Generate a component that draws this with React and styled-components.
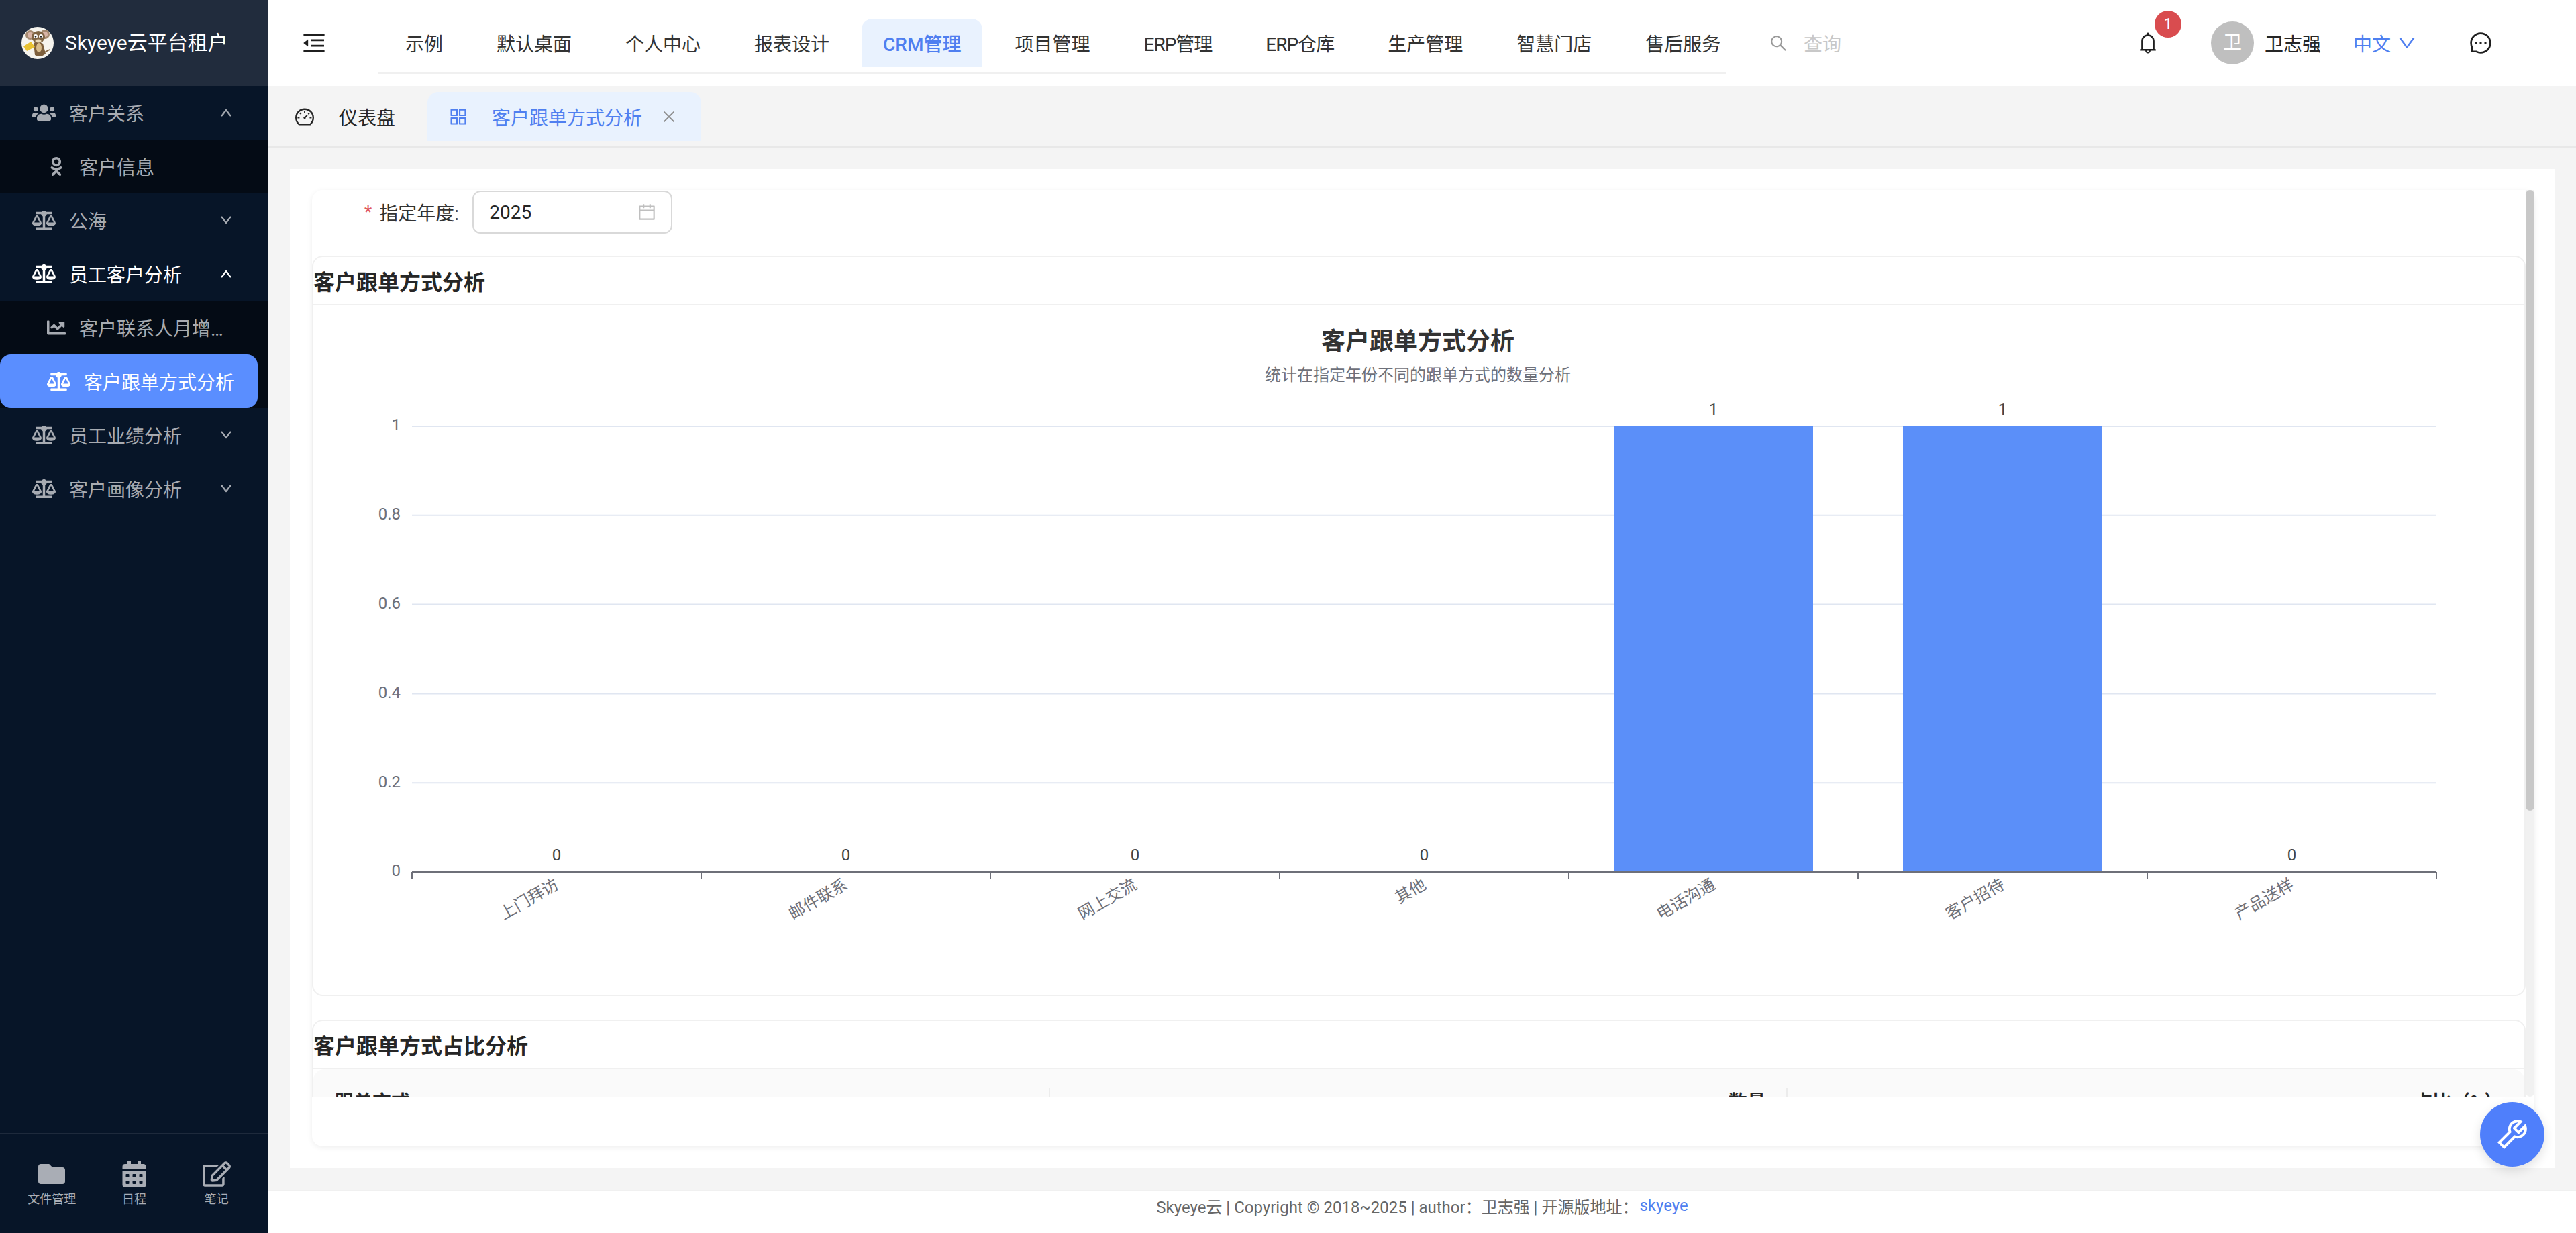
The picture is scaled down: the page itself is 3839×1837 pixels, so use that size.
import React from "react";
import styled, { createGlobalStyle } from "styled-components";
import {
  FaUsers,
  FaOdnoklassniki,
  FaBalanceScale,
  FaChartLine,
  FaFolder,
  FaCalendarAlt,
  FaRegEdit,
} from "react-icons/fa";
import {
  AiOutlineMenuFold,
  AiOutlineDashboard,
  AiOutlineAppstore,
  AiOutlineClose,
  AiOutlineSearch,
  AiOutlineBell,
  AiOutlineMessage,
  AiOutlineCalendar,
  AiOutlineDown,
  AiOutlineUp,
  AiOutlineTool,
} from "react-icons/ai";

const GlobalStyle = createGlobalStyle`
  html, body {
    margin: 0;
    padding: 0;
    background: #fff;
    overflow: hidden;
  }
  body, button, input {
    font-family: Roboto, "Noto Sans CJK SC", sans-serif;
  }
  * {
    box-sizing: border-box;
  }
`;

const Page = styled.div`
  display: flex;
  height: 100vh;
  font-size: 28px;
  color: #262626;
`;

const Sidebar = styled.aside`
  width: 400px;
  flex: none;
  display: flex;
  flex-direction: column;
  background: #071528;
`;

const Brand = styled.div`
  height: 128px;
  flex: none;
  display: flex;
  align-items: center;
  gap: 17px;
  padding-left: 32px;
  background: #212c3d;
  color: #fff;
  font-size: 30px;
  line-height: 1;
`;

const Menu = styled.nav`
  flex: 1;
`;

const MenuRow = styled.div`
  height: 80px;
  display: flex;
  align-items: center;
  padding: 0 53px 0 48px;
  color: ${(p) => (p.$open ? "#fff" : "#a7abb2")};
  svg.lead {
    width: 35px;
    height: 28px;
    margin-right: 20px;
  }
  svg.arrow {
    width: 20px;
    height: 20px;
    margin-left: auto;
    stroke: currentColor;
    stroke-width: 50;
  }
`;

const SubList = styled.div`
  background: #040b15;
`;

const SubRow = styled.div`
  height: 80px;
  display: flex;
  align-items: center;
  width: ${(p) => (p.$active ? "384px" : "auto")};
  padding-left: 70px;
  color: ${(p) => (p.$active ? "#fff" : "#a7abb2")};
  background: ${(p) => (p.$active ? "#5a8eff" : "transparent")};
  border-radius: ${(p) => (p.$active ? "16px" : "0")};
  svg {
    width: ${(p) => (p.$active ? "35px" : "28px")};
    height: 28px;
    flex: none;
  }
`;

const SubLabel = styled.span`
  margin-left: 20px;
  width: ${(p) => (p.$clip ? "220px" : "auto")};
  white-space: nowrap;
  overflow: hidden;
  text-overflow: ellipsis;
`;

const ToolBar = styled.div`
  display: grid;
  grid-template-columns: repeat(3, 1fr);
  padding: 39px 16px 0;
  height: 149px;
  flex: none;
  border-top: 2px solid #1e2a3c;
`;

const Tool = styled.div`
  display: flex;
  flex-direction: column;
  align-items: center;
  color: #a9adb5;
  font-size: 18px;
  line-height: 26px;
  svg {
    width: 42px;
    height: 40px;
    margin-bottom: 5px;
  }
`;

const Main = styled.div`
  flex: 1;
  min-width: 0;
  display: flex;
  flex-direction: column;
  background: #f4f4f4;
`;

const Header = styled.header`
  height: 128px;
  flex: none;
  display: flex;
  align-items: flex-start;
  background: #fff;
  padding-left: 48px;
`;

const FoldIcon = styled(AiOutlineMenuFold)`
  width: 40px;
  height: 40px;
  margin: 44px 76px 0 0;
  flex: none;
  color: #1f1f1f;
`;

const TopNav = styled.nav`
  display: flex;
  gap: 16px;
  width: 2008px;
  flex: none;
  height: 110px;
  padding: 28px 8px 8px;
  border-bottom: 2px solid #f0f0f0;
`;

const TopItem = styled.div`
  height: 72px;
  padding: 0 32px;
  flex: none;
  display: flex;
  align-items: center;
  white-space: nowrap;
  border-radius: 16px 16px 0 0;
  background: ${(p) => (p.$active ? "#e9f2fe" : "transparent")};
  color: ${(p) => (p.$active ? "#4f7ff0" : "#333")};
  font-weight: ${(p) => (p.$active ? 500 : 400)};
  letter-spacing: ${(p) => (p.$tight ? "-1px" : "0")};
`;

const Search = styled.div`
  display: flex;
  align-items: center;
  gap: 23px;
  height: 72px;
  margin: 28px 0 0 64px;
  color: #c8c8c8;
  svg {
    width: 29px;
    height: 29px;
    color: #999;
  }
`;

const UserArea = styled.div`
  margin: 32px 124px 0 auto;
  height: 64px;
  display: flex;
  align-items: center;
`;

const Bell = styled.div`
  position: relative;
  width: 36px;
  height: 36px;
  svg {
    display: block;
    width: 36px;
    height: 36px;
    color: #1f1f1f;
  }
`;

const Badge = styled.span`
  position: absolute;
  left: 28px;
  top: -30px;
  width: 40px;
  height: 40px;
  border-radius: 50%;
  background: #d94c4f;
  color: #fff;
  font-size: 22px;
  line-height: 40px;
  text-align: center;
`;

const Avatar = styled.div`
  width: 64px;
  height: 64px;
  margin-left: 76px;
  border-radius: 50%;
  background: #bfbfbf;
  color: #fff;
  line-height: 64px;
  text-align: center;
`;

const UserName = styled.span`
  margin-left: 16px;
`;

const Lang = styled.span`
  margin-left: 48px;
  display: flex;
  align-items: center;
  gap: 8px;
  color: #4f7ff0;
  svg {
    width: 32px;
    height: 32px;
  }
`;

const ChatIcon = styled(AiOutlineMessage)`
  width: 36px;
  height: 36px;
  margin-left: 76px;
  color: #1f1f1f;
`;

const TabBar = styled.div`
  height: 92px;
  flex: none;
  display: flex;
  gap: 16px;
  padding: 9px 0 8px 8px;
  border-bottom: 2px solid #e8e8e8;
`;

const Tab = styled.div`
  height: 73px;
  display: flex;
  align-items: center;
  padding: 0 ${(p) => (p.$active ? 36 : 32)}px 0 32px;
  border-radius: 16px 16px 0 0;
  background: ${(p) => (p.$active ? "#e9f2fe" : "transparent")};
  color: ${(p) => (p.$active ? "#4f7ff0" : "#262626")};
  svg.icon {
    width: 32px;
    height: 32px;
    margin: 0 ${(p) => (p.$active ? 34 : 35)}px 0 -2px;
  }
  svg.close {
    width: 24px;
    height: 24px;
    margin-left: 28px;
    color: #8c8c8c;
  }
`;

const Content = styled.main`
  flex: 1;
  min-height: 0;
  display: flex;
  padding: 32px 31px 33px 32px;
`;

const Sheet = styled.div`
  flex: 1;
  min-width: 0;
  background: #fff;
  padding: 31px 31px 32px 33px;
`;

const Panel = styled.div`
  height: 100%;
  display: flex;
  align-items: flex-start;
  border-radius: 16px;
  box-shadow: 0 2px 8px rgba(0, 0, 0, 0.07);
`;

const Scroller = styled.div`
  flex: 1;
  min-width: 0;
  height: 1351px;
  overflow: hidden;
`;

const ScrollTrack = styled.div`
  width: 13px;
  height: 1351px;
  flex: none;
  background: #f1f1f1;
  border-radius: 0 0 8px 8px;
`;

const ScrollThumb = styled.div`
  height: 925px;
  background: #c8c8c8;
  border-radius: 7px;
`;

const FormRow = styled.div`
  display: flex;
  align-items: center;
  height: 98px;
  padding: 1px 0 33px 78px;
`;

const Required = styled.span`
  color: #e0575b;
  font-size: 26px;
  margin-right: 11px;
`;

const FormLabel = styled.label`
  width: 139px;
  color: #333;
`;

const DateBox = styled.div`
  width: 298px;
  height: 64px;
  display: flex;
  align-items: center;
  justify-content: space-between;
  padding: 0 21px 0 23px;
  border: 2px solid #d9d9d9;
  border-radius: 12px;
  svg {
    width: 30px;
    height: 30px;
    color: #bfbfbf;
  }
`;

const Card = styled.section`
  border: 2px solid #f0f0f0;
  border-radius: 16px;
  margin-bottom: ${(p) => p.$gap || 0}px;
`;

const CardHead = styled.h3`
  margin: 0;
  height: 72px;
  display: flex;
  align-items: center;
  border-bottom: 2px solid #f0f0f0;
  font-size: 32px;
  font-weight: 700;
  color: #262626;
`;

const ChartBox = styled.div`
  height: 1027px;
  svg {
    display: block;
  }
`;

const Table = styled.table`
  width: 100%;
  border-collapse: collapse;
  table-layout: fixed;
`;

const Th = styled.th`
  position: relative;
  height: 100px;
  padding: 0 32px;
  background: #fafafa;
  font-weight: 600;
  font-size: 28px;
  line-height: 44px;
  text-align: ${(p) => (p.$right ? "right" : "left")};
  &:first-child {
    border-top-left-radius: 16px;
  }
  &:last-child {
    border-top-right-radius: 16px;
  }
  &:not(:last-child)::before {
    content: "";
    position: absolute;
    right: 0;
    top: 28px;
    width: 2px;
    height: 44px;
    background: #ececec;
  }
`;

const Td = styled.td`
  height: 82px;
  padding: 0 32px;
  border-bottom: 2px solid #f0f0f0;
  text-align: ${(p) => (p.$right ? "right" : "left")};
`;

const FloatButton = styled.button`
  position: fixed;
  right: 47px;
  bottom: 99px;
  width: 96px;
  height: 96px;
  padding: 0;
  border: none;
  border-radius: 50%;
  background: #4f7ffb;
  color: #fff;
  box-shadow: 0 6px 16px rgba(0, 0, 0, 0.12);
  display: flex;
  align-items: center;
  justify-content: center;
  svg {
    width: 56px;
    height: 56px;
  }
`;

const Footer = styled.footer`
  height: 64px;
  flex: none;
  background: #fff;
  border-top: 2px solid #f0f0f0;
  padding-bottom: 20px;
  display: flex;
  align-items: center;
  justify-content: center;
  font-size: 24px;
  color: #666;
  white-space: pre;
  a {
    color: #4f7ff0;
    text-decoration: none;
    margin-left: 2px;
  }
`;

const topItems = ["示例", "默认桌面", "个人中心", "报表设计", "CRM管理", "项目管理", "ERP管理", "ERP仓库", "生产管理", "智慧门店", "售后服务"];

const categories = [
  { name: "上门拜访", value: 0 },
  { name: "邮件联系", value: 0 },
  { name: "网上交流", value: 0 },
  { name: "其他", value: 0 },
  { name: "电话沟通", value: 1 },
  { name: "客户招待", value: 1 },
  { name: "产品送样", value: 0 },
];

const grid = { left: 147, right: 3164, top: 180, bottom: 844 };
const step = (grid.right - grid.left) / categories.length;
const plotHeight = grid.bottom - grid.top;
const barWidth = 297;
const yTicks = [0, 0.2, 0.4, 0.6, 0.8, 1];

const Logo = () => (
  <svg width="48" height="48" viewBox="0 0 48 48">
    <circle cx="24" cy="24" r="24" fill="#f6f4ee" />
    <ellipse cx="13" cy="12" rx="7" ry="7" fill="#a58a70" />
    <ellipse cx="35" cy="11" rx="7" ry="7" fill="#a58a70" />
    <ellipse cx="13" cy="12" rx="4" ry="4" fill="#d8b4a6" />
    <ellipse cx="35" cy="11" rx="4" ry="4" fill="#d8b4a6" />
    <ellipse cx="25" cy="15" rx="10" ry="9" fill="#7f6443" />
    <path d="M18 24 Q25 20 32 25 L36 40 Q28 47 20 42 Z" fill="#7d5f3c" />
    <ellipse cx="26" cy="31" rx="4" ry="7" fill="#d8bc8c" />
    <circle cx="21" cy="14" r="3" fill="#fff" />
    <circle cx="29" cy="14" r="3" fill="#fff" />
    <circle cx="21" cy="14.5" r="1.3" fill="#222" />
    <circle cx="29" cy="14.5" r="1.3" fill="#222" />
    <ellipse cx="25" cy="21" rx="4.5" ry="2.4" fill="#e8d8b8" />
    <path d="M3 29 L14 22 L20 30 L8 36 Z" fill="#e9c233" />
    <path d="M34 38 L42 34" stroke="#7d5f3c" strokeWidth="1.4" />
  </svg>
);

const Chart = () => (
  <svg width="3296" height="1027" viewBox="0 0 3296 1027">
    <text x="1646" y="66" textAnchor="middle" fontSize="36" fontWeight="700" fill="#333">客户跟单方式分析</text>
    <text x="1646" y="112" textAnchor="middle" fontSize="24" fill="#6e7079">统计在指定年份不同的跟单方式的数量分析</text>
    {yTicks.map((t) => {
      const y = grid.bottom - t * plotHeight;
      return (
        <g key={t}>
          {t > 0 && <line x1={grid.left} x2={grid.right} y1={y} y2={y} stroke="#e0e6f1" strokeWidth="2" />}
          <text x={grid.left - 17} y={y} dominantBaseline="middle" textAnchor="end" fontSize="24" fill="#6e7079">{t}</text>
        </g>
      );
    })}
    {categories.map((c, i) => {
      const cx = grid.left + step * (i + 0.5);
      const h = c.value * plotHeight;
      return (
        <g key={c.name}>
          {c.value > 0 && <rect x={cx - barWidth / 2} y={grid.bottom - h} width={barWidth} height={h} fill="#5b8ff9" />}
          <text x={cx} y={grid.bottom - h - 17} textAnchor="middle" fontSize="24" fill="#444">{c.value}</text>
          <text
            x={cx}
            y={grid.bottom + 25}
            textAnchor="end"
            fontSize="24"
            fill="#6e7079"
            transform={`rotate(-30 ${cx} ${grid.bottom + 16})`}
          >
            {c.name}
          </text>
        </g>
      );
    })}
    <line x1={grid.left} x2={grid.right} y1={grid.bottom} y2={grid.bottom} stroke="#6e7079" strokeWidth="2" />
    {categories.map((c, i) => (
      <line key={c.name} x1={grid.left + step * i} x2={grid.left + step * i} y1={grid.bottom} y2={grid.bottom + 10} stroke="#6e7079" strokeWidth="2" />
    ))}
    <line x1={grid.right} x2={grid.right} y1={grid.bottom} y2={grid.bottom + 10} stroke="#6e7079" strokeWidth="2" />
  </svg>
);

export default function App() {
  return (
    <Page>
      <GlobalStyle />
      <Sidebar>
        <Brand>
          <Logo />
          Skyeye云平台租户
        </Brand>
        <Menu>
          <MenuRow>
            <FaUsers className="lead" />
            客户关系
            <AiOutlineUp className="arrow" />
          </MenuRow>
          <SubList>
            <SubRow>
              <FaOdnoklassniki />
              <SubLabel>客户信息</SubLabel>
            </SubRow>
          </SubList>
          <MenuRow>
            <FaBalanceScale className="lead" />
            公海
            <AiOutlineDown className="arrow" />
          </MenuRow>
          <MenuRow $open>
            <FaBalanceScale className="lead" />
            员工客户分析
            <AiOutlineUp className="arrow" />
          </MenuRow>
          <SubList>
            <SubRow>
              <FaChartLine />
              <SubLabel $clip>客户联系人月增长分析</SubLabel>
            </SubRow>
            <SubRow $active>
              <FaBalanceScale />
              <SubLabel>客户跟单方式分析</SubLabel>
            </SubRow>
          </SubList>
          <MenuRow>
            <FaBalanceScale className="lead" />
            员工业绩分析
            <AiOutlineDown className="arrow" />
          </MenuRow>
          <MenuRow>
            <FaBalanceScale className="lead" />
            客户画像分析
            <AiOutlineDown className="arrow" />
          </MenuRow>
        </Menu>
        <ToolBar>
          <Tool><FaFolder />文件管理</Tool>
          <Tool><FaCalendarAlt />日程</Tool>
          <Tool><FaRegEdit />笔记</Tool>
        </ToolBar>
      </Sidebar>

      <Main>
        <Header>
          <FoldIcon />
          <TopNav>
            {topItems.map((item) => (
              <TopItem key={item} $active={item === "CRM管理"} $tight={item.startsWith("ERP")}>{item}</TopItem>
            ))}
          </TopNav>
          <Search>
            <AiOutlineSearch />
            查询
          </Search>
          <UserArea>
            <Bell>
              <AiOutlineBell />
              <Badge>1</Badge>
            </Bell>
            <Avatar>卫</Avatar>
            <UserName>卫志强</UserName>
            <Lang>中文<AiOutlineDown /></Lang>
            <ChatIcon />
          </UserArea>
        </Header>

        <TabBar>
          <Tab>
            <AiOutlineDashboard className="icon" />
            仪表盘
          </Tab>
          <Tab $active>
            <AiOutlineAppstore className="icon" />
            客户跟单方式分析
            <AiOutlineClose className="close" />
          </Tab>
        </TabBar>

        <Content>
          <Sheet>
            <Panel>
              <Scroller>
                <FormRow>
                  <Required>*</Required>
                  <FormLabel>指定年度:</FormLabel>
                  <DateBox>
                    2025
                    <AiOutlineCalendar />
                  </DateBox>
                </FormRow>
                <Card $gap={35}>
                  <CardHead>客户跟单方式分析</CardHead>
                  <ChartBox>
                    <Chart />
                  </ChartBox>
                </Card>
                <Card>
                  <CardHead>客户跟单方式占比分析</CardHead>
                  <Table>
                    <thead>
                      <tr>
                        <Th>跟单方式</Th>
                        <Th $right>数量</Th>
                        <Th $right>占比（%）</Th>
                      </tr>
                    </thead>
                    <tbody>
                      {categories.map((c) => (
                        <tr key={c.name}>
                          <Td>{c.name}</Td>
                          <Td $right>{c.value}</Td>
                          <Td $right>{c.value * 50}</Td>
                        </tr>
                      ))}
                    </tbody>
                  </Table>
                </Card>
              </Scroller>
              <ScrollTrack>
                <ScrollThumb />
              </ScrollTrack>
            </Panel>
          </Sheet>
        </Content>

        <Footer>
          Skyeye云 | Copyright © 2018~2025 | author：卫志强 | 开源版地址：<a href="#skyeye">skyeye</a>
        </Footer>
      </Main>

      <FloatButton>
        <AiOutlineTool />
      </FloatButton>
    </Page>
  );
}
